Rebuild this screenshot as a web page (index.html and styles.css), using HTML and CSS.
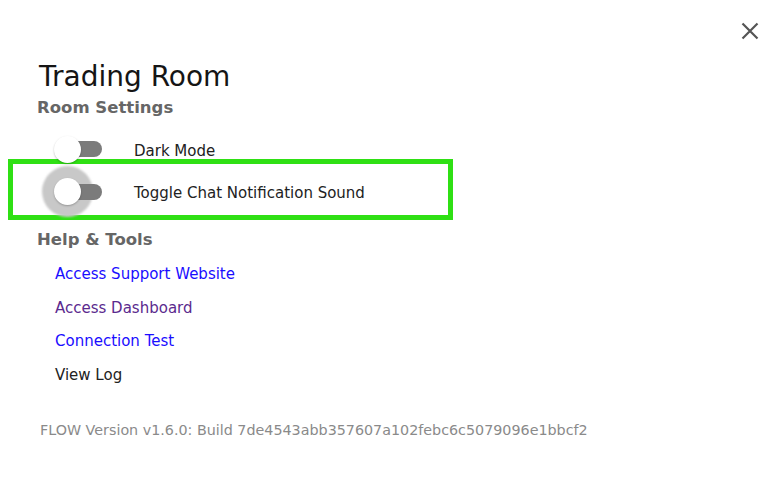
FILE: index.html
```html
<!DOCTYPE html>
<html lang="en">
<head>
<meta charset="utf-8">
<title>Trading Room</title>
<link rel="stylesheet" href="styles.css">
</head>
<body>
<div class="dialog">
  <button class="close" aria-label="Close">
    <svg width="18" height="18" viewBox="0 0 18 18"><path d="M1.5 1.5 L16.5 16.5 M16.5 1.5 L1.5 16.5" stroke="#555" stroke-width="2.2" fill="none" stroke-linecap="butt"/></svg>
  </button>
  <h1 class="title">Trading Room</h1>
  <h2 class="section-title">Room Settings</h2>
  <div class="settings">
    <div class="row">
      <span class="switch"><span class="track"></span><span class="thumb"></span></span>
      <span class="label">Dark Mode</span>
    </div>
    <div class="row row-focused">
      <span class="switch"><span class="halo"></span><span class="track"></span><span class="thumb"></span></span>
      <span class="label">Toggle Chat Notification Sound</span>
    </div>
  </div>
  <h2 class="section-title help">Help &amp; Tools</h2>
  <nav class="links">
    <a class="link" href="#">Access Support Website</a>
    <a class="link visited" href="#">Access Dashboard</a>
    <a class="link" href="#">Connection Test</a>
    <a class="link plain" href="#">View Log</a>
  </nav>
  <p class="version">FLOW Version v1.6.0: Build 7de4543abb357607a102febc6c5079096e1bbcf2</p>
</div>
</body>
</html>
```
FILE: styles.css
```css
html, body {
  margin: 0;
  padding: 0;
  background: #ffffff;
}
body {
  font-family: "DejaVu Sans", "Liberation Sans", sans-serif;
  color: #222;
  width: 773px;
  height: 487px;
  overflow: hidden;
}
.dialog {
  position: relative;
  padding: 61px 0 0 37px;
}
.close {
  position: absolute;
  top: 21px;
  left: 740px;
  width: 19px;
  height: 19px;
  padding: 0;
  border: 0;
  background: transparent;
  display: flex;
  align-items: center;
  justify-content: center;
}
.title {
  margin: 0 0 0 2px;
  font-size: 28px;
  line-height: 32px;
  font-weight: normal;
  color: #151515;
}
.section-title {
  margin: 5px 0 0 0;
  font-size: 16.5px;
  line-height: 20px;
  font-weight: bold;
  color: #666666;
}
.settings {
  margin-top: 10px;
  display: flex;
  flex-direction: column;
}
.row {
  height: 42px;
  display: flex;
  align-items: center;
}
.row-focused {
  box-sizing: border-box;
  height: 61px;
  width: 445px;
  margin: -11px 0 0 -29px;
  padding: 4px 0 0 24px;
  border: 5px solid #2fe014;
}
.switch {
  position: relative;
  flex: none;
  width: 66px;
  height: 48px;
  margin-left: 6px;
}
.track {
  position: absolute;
  left: 15px;
  top: 16px;
  width: 44px;
  height: 16px;
  border-radius: 8px;
  background: #7b7b7b;
}
.thumb {
  position: absolute;
  left: 10.5px;
  top: 10.5px;
  width: 27px;
  height: 27px;
  border-radius: 50%;
  background: #ffffff;
  box-shadow: 0 1px 2px rgba(0,0,0,0.25);
}
.halo {
  position: absolute;
  left: -1.5px;
  top: -1.5px;
  width: 51px;
  height: 51px;
  border-radius: 50%;
  background: #c8c8c8;
  filter: blur(1px);
}
.label {
  margin-left: 25px;
  padding-top: 3px;
  font-size: 15px;
  line-height: 18px;
  color: #222;
}
.help {
  margin-top: 9.5px;
}
.links {
  margin: 15.8px 0 0 18px;
  display: flex;
  flex-direction: column;
  align-items: flex-start;
  gap: 15.6px;
}
.link {
  font-size: 15px;
  line-height: 18px;
  color: #1a0dff;
  text-decoration: none;
}
.link.visited {
  color: #5b2a8e;
}
.link.plain {
  color: #222;
}
.version {
  margin: 37px 0 0 3px;
  font-size: 14.3px;
  line-height: 18px;
  color: #8a8a8a;
}
```
